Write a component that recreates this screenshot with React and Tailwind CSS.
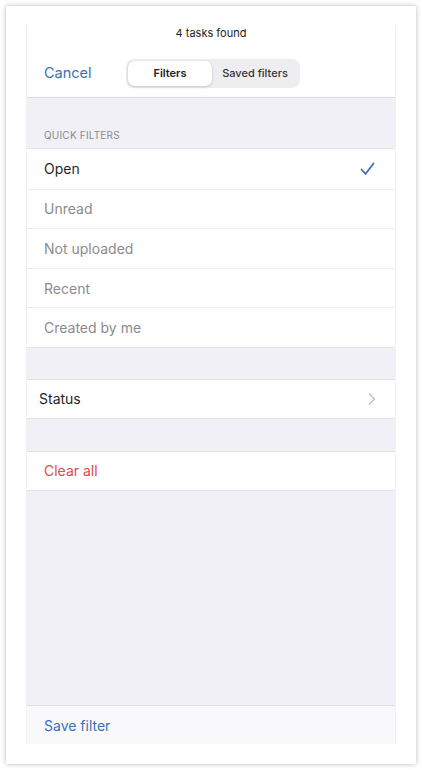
import { useState } from 'react'

const quickFilters = ['Open', 'Unread', 'Not uploaded', 'Recent', 'Created by me']

const Check = () => (
  <svg width="15" height="14" viewBox="0 0 15 14" fill="none">
    <path d="M1.5 7.5 L5.5 12 L13.5 1.5" stroke="#3b6db3" strokeWidth="1.8" strokeLinecap="round" strokeLinejoin="round" />
  </svg>
)

const Chevron = () => (
  <svg width="8" height="12" viewBox="0 0 8 12" fill="none">
    <path d="M1.5 1 L6.5 6 L1.5 11" stroke="#c4c4c8" strokeWidth="1.6" strokeLinecap="round" strokeLinejoin="round" />
  </svg>
)

const App = () => {
  const [selected, setSelected] = useState('Open')
  const [tab, setTab] = useState('Filters')

  return (
    <div className="w-[422px] h-[770px] bg-white p-[6px] font-['Inter',sans-serif]">
      <div className="h-[758px] w-[410px] bg-white shadow-[0_0_5px_rgba(0,0,0,0.28)] px-[20px] pt-[19px] pb-[20px]">
        <div className="h-[719px] w-[370px] flex flex-col border-x border-[#f1f1f4]">
          {/* Header */}
          <div className="bg-white border-b border-[#dcdce0]">
            <p className="text-center text-[11px] text-[#222] h-[24px] leading-[16px]">4 tasks found</p>
            <div className="relative h-[48px] flex items-start">
              <button className="pl-[17px] mt-[14px] leading-[20px] text-[14.5px] text-[#3d6fb5]">Cancel</button>
              <div className="absolute left-[99px] top-[10px] w-[174px] h-[29px] bg-[#eeeef1] rounded-[8px] p-[2px] flex">
                {['Filters', 'Saved filters'].map((t) => (
                  <button
                    key={t}
                    onClick={() => setTab(t)}
                    className={`flex-1 text-[11px] rounded-[7px] ${
                      tab === t
                        ? 'bg-white shadow-[0_1px_3px_rgba(0,0,0,0.18)] w-[84px] flex-none font-semibold text-[#222]'
                        : 'font-medium text-[#333]'
                    }`}
                  >
                    {t}
                  </button>
                ))}
              </div>
            </div>
          </div>

          {/* Quick filters */}
          <div className="bg-[#f0f0f6] h-[50px] flex items-end pb-[5px] pl-[17px]">
            <span className="text-[10px] tracking-[0.2px] text-[#8a8a8e] uppercase">Quick filters</span>
          </div>
          <div className="bg-white border-t border-[#e4e4e8]">
            {quickFilters.map((f, i) => (
              <button
                key={f}
                onClick={() => setSelected(f)}
                className={`w-full h-[39.6px] flex items-center justify-between pl-[17px] pr-[20px] text-[14px] ${
                  i > 0 ? 'border-t border-[#ececef]' : ''
                } ${selected === f ? 'text-[#1f1f1f]' : 'text-[#8b8b8f]'}`}
              >
                <span>{f}</span>
                {selected === f && <Check />}
              </button>
            ))}
          </div>

          <div className="h-[32px] bg-[#f0f0f6] border-t border-[#e4e4e8]" />

          <button className="bg-white h-[39px] border-t border-[#e4e4e8] flex items-center justify-between pl-[12px] pr-[19px] text-[14px] text-[#1f1f1f]">
            <span>Status</span>
            <Chevron />
          </button>

          <div className="h-[33px] bg-[#f0f0f6] border-t border-[#e4e4e8]" />

          <button className="bg-white h-[39px] border-t border-[#e4e4e8] flex items-center pl-[17px] text-[14px] text-[#e0484b]">
            Clear all
          </button>

          <div className="flex-1 bg-[#f0f0f6] border-t border-[#e4e4e8]" />

          <div className="h-[39px] bg-[#f9f9fc] border-t border-[#dedee3] flex items-center pl-[17px]">
            <button className="text-[14px] text-[#3d6fb5]">Save filter</button>
          </div>
        </div>
      </div>
    </div>
  )
}

export default App
